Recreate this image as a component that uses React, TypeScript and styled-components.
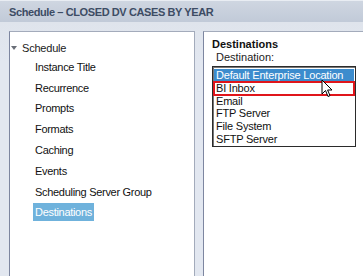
import React from "react";
import styled, { createGlobalStyle } from "styled-components";

const GlobalStyle = createGlobalStyle`
    html, body {
        margin: 0;
        padding: 0;
        width: 363px;
        height: 276px;
        overflow: hidden;
        background: #e2e7ef;
        font-family: "Liberation Sans", Arial, sans-serif;
    }
`;

const treeItems = [
    "Instance Title",
    "Recurrence",
    "Prompts",
    "Formats",
    "Caching",
    "Events",
    "Scheduling Server Group",
    "Destinations",
];

const destinations = [
    "Default Enterprise Location",
    "BI Inbox",
    "Email",
    "FTP Server",
    "File System",
    "SFTP Server",
];

export default function App() {
    return (
        <>
            <GlobalStyle />
            <Window>
                <TitleBar>Schedule – CLOSED DV CASES BY YEAR</TitleBar>
                <Content>
                    <TreePanel>
                        <TreeRoot>
                            <Caret />
                            Schedule
                        </TreeRoot>
                        {treeItems.map((item) => (
                            <TreeRow key={item}>
                                <TreeLabel $selected={item === "Destinations"}>
                                    {item}
                                </TreeLabel>
                            </TreeRow>
                        ))}
                    </TreePanel>
                    <DetailPanel>
                        <SectionTitle>Destinations</SectionTitle>
                        <FieldLabel>Destination:</FieldLabel>
                        <ListBox>
                            {destinations.map((d, i) => (
                                <ListItem
                                    key={d}
                                    $selected={i === 0}
                                    $marked={i === 1}
                                >
                                    {d}
                                </ListItem>
                            ))}
                            <Cursor viewBox="0 0 12 19">
                                <path
                                    d="M1 1 L1 15 L4.5 11.5 L7 17.5 L9 16.6 L6.6 11 L11 11 Z"
                                    fill="#ffffff"
                                    stroke="#000000"
                                    strokeWidth="1"
                                    strokeLinejoin="round"
                                />
                            </Cursor>
                        </ListBox>
                    </DetailPanel>
                </Content>
            </Window>
        </>
    );
}

const Window = styled.div`
    display: flex;
    flex-direction: column;
    width: 363px;
    height: 276px;
`;

const TitleBar = styled.div`
    height: 22px;
    display: flex;
    align-items: center;
    padding-left: 9px;
    background: linear-gradient(#cfd6e1, #c1cad8);
    border-top: 1px solid #e9edf3;
    box-sizing: border-box;
    font-size: 11px;
    font-weight: bold;
    letter-spacing: -0.4px;
    color: #3d4c64;
`;

const Content = styled.div`
    flex: 1;
    display: flex;
    gap: 8px;
    padding: 9px 0 0 9px;
    background: linear-gradient(#dfe4ec, #e2e7f0 40px);
    min-height: 0;
`;

// 왼쪽 트리
const TreePanel = styled.div`
    width: 186px;
    flex-shrink: 0;
    background: #ffffff;
    border: 1px solid #a3abbb;
    border-bottom: none;
    border-left-color: #7d86a0;
    padding-top: 9px;
    box-sizing: border-box;
`;

const TreeRoot = styled.div`
    display: flex;
    align-items: center;
    height: 14px;
    padding-left: 1px;
    font-size: 11px;
    letter-spacing: -0.2px;
    color: #1a1a1a;
`;

const Caret = styled.span`
    width: 0;
    height: 0;
    border-left: 3.5px solid transparent;
    border-right: 3.5px solid transparent;
    border-top: 4px solid #6a6f78;
    margin-right: 5px;
`;

const TreeRow = styled.div`
    height: 20.8px;
    display: flex;
    align-items: flex-end;
    padding-left: 23px;
`;

const TreeLabel = styled.span<{ $selected?: boolean }>`
    font-size: 11px;
    padding: 2px 2px 2px;
    line-height: 14px;
    letter-spacing: -0.3px;
    color: ${(p) => (p.$selected ? "#ffffff" : "#111111")};
    background: ${(p) => (p.$selected ? "#6fb2dc" : "transparent")};
`;

// 오른쪽 상세
const DetailPanel = styled.div`
    flex: 1;
    background: #ffffff;
    border: 1px solid #a3abbb;
    border-left-color: #7d86a0;
    border-right: none;
    border-bottom: none;
    padding: 6px 0 0 8px;
    box-sizing: border-box;
`;

const SectionTitle = styled.div`
    font-size: 11px;
    font-weight: bold;
    color: #111111;
`;

const FieldLabel = styled.div`
    font-size: 11px;
    color: #222222;
    margin: 1px 0 0 4px;
`;

const ListBox = styled.div`
    position: relative;
    width: 144px;
    margin-top: 3px;
    border: 1px solid #2b2b2b;
    box-shadow: inset 1px 1px 0 #777777;
    padding: 2px 1px 0;
    box-sizing: border-box;
`;

const ListItem = styled.div<{ $selected?: boolean; $marked?: boolean }>`
    height: 12.8px;
    line-height: 13px;
    font-size: 11px;
    letter-spacing: -0.2px;
    padding-left: 2px;
    color: ${(p) => (p.$selected ? "#ffffff" : "#111111")};
    background: ${(p) => (p.$selected ? "#3c8ccd" : "transparent")};
    outline: ${(p) => (p.$marked ? "2px solid #e0151b" : "none")};
    outline-offset: -1px;
`;

const Cursor = styled.svg`
    position: absolute;
    left: 108px;
    top: 12px;
    width: 12px;
    height: 19px;
`;
